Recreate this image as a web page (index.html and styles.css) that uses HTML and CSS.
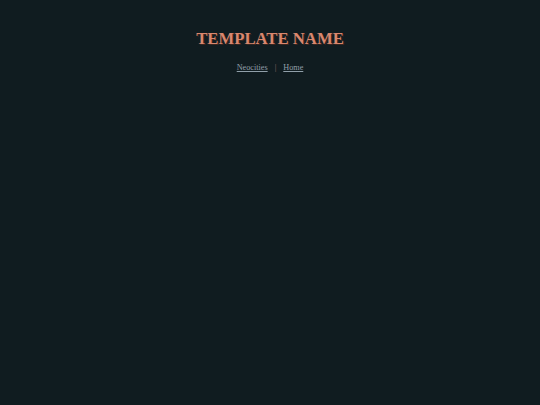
FILE: index.html
```html
<!DOCTYPE html>
<html>
<head>
<meta charset="utf-8">
<link rel="stylesheet" href="styles.css">
</head>
<body>
<header class="header">
  <h1 class="title">TEMPLATE NAME</h1>
  <nav class="nav">
    <a href="#" class="link">Neocities</a>
    <span class="sep">|</span>
    <a href="#" class="link">Home</a>
  </nav>
</header>
</body>
</html>
```
FILE: styles.css
```css
html, body {
  margin: 0;
  padding: 0;
  background: #101c20;
  height: 100%;
}
body {
  font-family: "Liberation Serif", "DejaVu Serif", serif;
}
.header {
  display: flex;
  flex-direction: column;
  align-items: center;
  padding-top: 29px;
}
.title {
  margin: 0;
  font-size: 16.7px;
  font-weight: bold;
  color: #d9876e;
  text-shadow: 1px 1px 0 #3a2620;
  line-height: 20px;
}
.nav {
  margin-top: 13px;
  display: flex;
  gap: 7px;
  font-size: 8.2px;
  line-height: 12px;
}
.link {
  color: #909fa9;
  text-decoration: underline;
}
.sep {
  color: #8a6a66;
}
```
